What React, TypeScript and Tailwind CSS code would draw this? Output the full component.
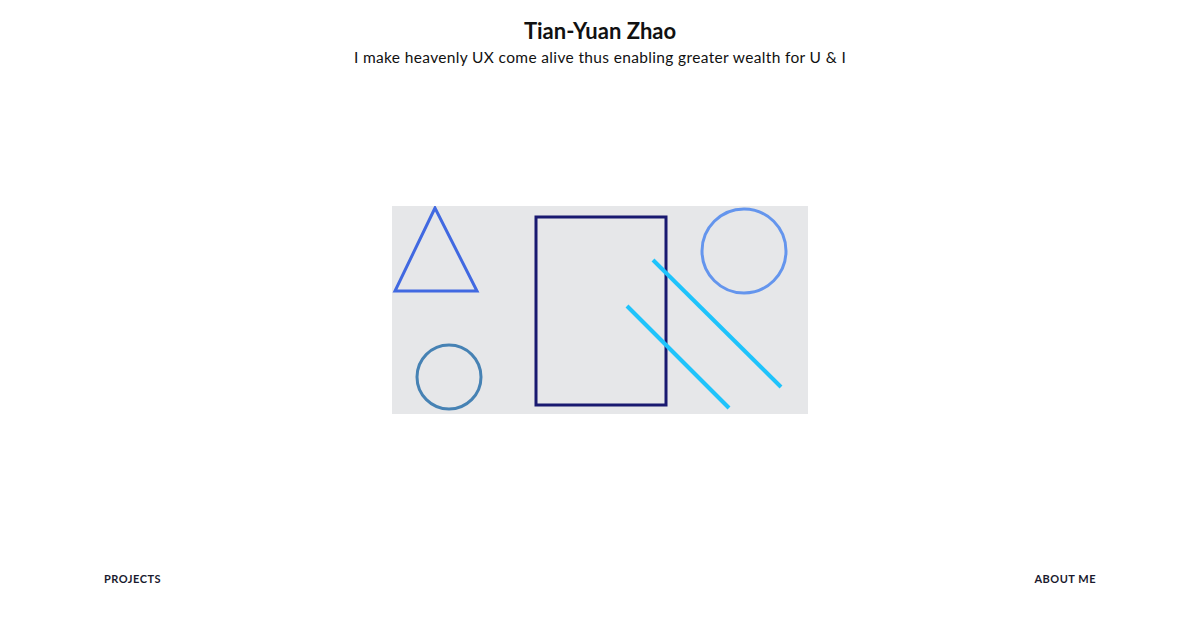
import React from 'react';

function Shapes() {
  return (
    <svg width="416" height="208" viewBox="0 0 416 208" className="block bg-[#e6e7e9]">
      <polygon points="43,2 3,85 85,85" fill="none" stroke="#4169e1" strokeWidth="3" />
      <circle cx="57" cy="171" r="32" fill="none" stroke="#4682b4" strokeWidth="3" />
      <rect x="144" y="11" width="130" height="188" fill="none" stroke="#191970" strokeWidth="3" />
      <circle cx="352" cy="45" r="42" fill="none" stroke="#6495ed" strokeWidth="3" />
      <line x1="261" y1="54" x2="389" y2="181" stroke="#1fc3fb" strokeWidth="4" />
      <line x1="235" y1="100" x2="337" y2="202" stroke="#1fc3fb" strokeWidth="4" />
    </svg>
  );
}

export default function App() {
  return (
    <div className="h-[620px] w-full bg-white flex flex-col text-[#111] font-['Lato','Liberation_Sans',sans-serif]">
      {/* Header */}
      <header className="pt-[18px] text-center">
        <h1 className="text-[22px] leading-[26px] font-bold">Tian-Yuan Zhao</h1>
        <p className="mt-[3px] text-[15.5px] leading-[20px] tracking-[0.35px]">
          I make heavenly UX come alive thus enabling greater wealth for U &amp; I
        </p>
      </header>

      {/* Main */}
      <main className="flex justify-center pt-[139px]">
        <Shapes />
      </main>

      {/* Nav */}
      <nav className="mt-auto mb-[33px] px-[104px] flex justify-between text-[11px] font-bold tracking-[0.5px] text-[#1a1a2e]">
        <span>PROJECTS</span>
        <span>ABOUT ME</span>
      </nav>
    </div>
  );
}
